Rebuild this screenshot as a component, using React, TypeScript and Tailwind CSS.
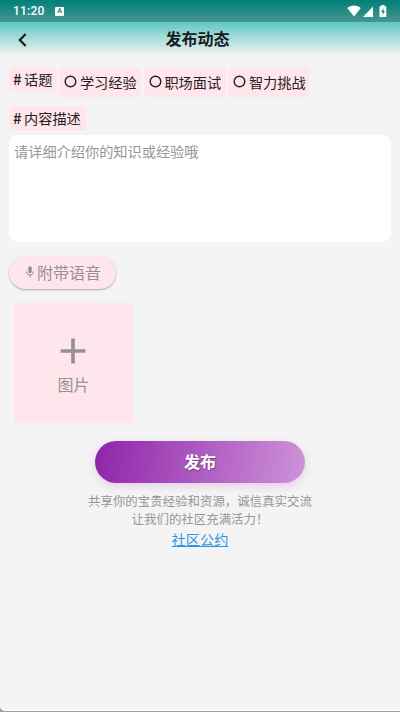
/**
 * "Publish a post" screen.
 *
 * Topic radio chips, a description box, optional voice and image
 * attachments, and the submit button with the community note below it.
 */

import { useState } from "react";

// ---------------------------------------------------------------------------
// Data
// ---------------------------------------------------------------------------

const TOPICS = ["学习经验", "职场面试", "智力挑战"];

// ---------------------------------------------------------------------------
// Icons
// ---------------------------------------------------------------------------

function WifiIcon() {
  return (
    <svg width="14" height="12" viewBox="0 0 14 12" fill="white">
      <path d="M7 11.5 0.2 3C2 1.4 4.4.5 7 .5S12 1.4 13.8 3Z" />
    </svg>
  );
}

function SignalIcon() {
  return (
    <svg width="10" height="11" viewBox="0 0 10 11" fill="white">
      <path d="M10 .4V11H0Z" />
    </svg>
  );
}

function BatteryIcon() {
  return (
    <svg width="8" height="12" viewBox="0 0 8 12">
      <path d="M2.3 0h3.2v1.2H7.3V12H.5V1.2h1.8Z" fill="white" />
      <path d="M4.5 3 2 7h1.6v3L6 6H4.5Z" fill="#2f8582" />
    </svg>
  );
}

function BackIcon() {
  return (
    <svg width="9" height="14" viewBox="0 0 9 14" fill="none" stroke="#181c1c" strokeWidth="2.2">
      <path d="M7.7 1 1.8 7l5.9 6" />
    </svg>
  );
}

function MicIcon() {
  return (
    <svg width="14" height="14" viewBox="0 0 24 24" fill="#969092">
      <path d="M12 14c1.66 0 3-1.34 3-3V5c0-1.66-1.34-3-3-3S9 3.34 9 5v6c0 1.66 1.34 3 3 3Zm5.3-3c0 3-2.54 5.1-5.3 5.1S6.7 14 6.7 11H5c0 3.41 2.72 6.23 6 6.72V21h2v-3.28c3.28-.48 6-3.3 6-6.72h-1.7Z" />
    </svg>
  );
}

function PlusIcon() {
  return (
    <svg width="26" height="26" viewBox="0 0 26 26" stroke="#969092" strokeWidth="3.7">
      <path d="M13 .5v25M.5 13h25" />
    </svg>
  );
}

// ---------------------------------------------------------------------------
// Parts
// ---------------------------------------------------------------------------

function SectionLabel({ text }: { text: string }) {
  return (
    <h2 className="flex h-[25px] items-center rounded-[4px] bg-[#ffe6ec] pr-[5px] pb-px pl-1 text-[14.2px] leading-[20px] text-[#252123]">
      <span className="mr-[2px] w-[9px] text-[15px] font-medium">#</span>
      {text}
    </h2>
  );
}

function Header() {
  return (
    <header className="flex h-14 flex-col bg-[linear-gradient(to_bottom,#00aba2,#f4f4f4)]">
      <div className="flex h-[22px] items-center bg-black/25 px-[13px] text-white">
        <span className="w-[42px] font-['Roboto',sans-serif] text-[12px] font-medium tracking-[0.2px]">
          11:20
        </span>
        <span className="flex h-[9px] w-[9px] items-center justify-center rounded-[1px] bg-white font-['Roboto',sans-serif] text-[7px] font-bold text-[#26847f]">
          A
        </span>
        <div className="ml-auto flex items-center">
          <WifiIcon />
          <span className="mt-px ml-[2px]">
            <SignalIcon />
          </span>
          <span className="ml-[6px]">
            <BatteryIcon />
          </span>
        </div>
      </div>
      <div className="grid flex-1 grid-cols-[40px_1fr_45px] items-center">
        <button type="button" aria-label="返回" className="pt-px pl-[18px]">
          <BackIcon />
        </button>
        <h1 className="pb-[2px] text-center text-[16px] leading-none font-bold text-[#181c1c]">发布动态</h1>
      </div>
    </header>
  );
}

// ---------------------------------------------------------------------------
// Page
// ---------------------------------------------------------------------------

export default function App() {
  const [topic, setTopic] = useState("");
  const [description, setDescription] = useState("");

  return (
    <div className="h-[712px] w-[400px] overflow-hidden bg-[#9c9c9c] pb-px font-['Noto_Sans_CJK_SC',sans-serif]">
      <div className="flex h-full flex-col overflow-hidden rounded-bl-[5px] border-b border-white bg-[#f4f4f4]">
        <Header />

        <main className="flex flex-1 flex-col px-[9px] pt-[11px]">
          {/* Topics */}
          <div className="flex items-start">
            <SectionLabel text="话题" />
            <div className="ml-[2px] flex gap-[2.5px]" role="radiogroup" aria-label="话题">
              {TOPICS.map((t) => (
                <button
                  key={t}
                  type="button"
                  role="radio"
                  aria-checked={topic === t}
                  onClick={() => setTopic(t)}
                  className="flex h-[30px] w-[82px] items-center rounded-[4px] bg-[#ffe6ec] pl-[5px] text-[14.2px] leading-none whitespace-nowrap text-[#252123]"
                >
                  <span className="mr-[2.5px] flex h-[13px] w-[13px] shrink-0 items-center justify-center pb-px">
                    <svg width="13" height="13" viewBox="0 0 13 13" fill="none" stroke="#252123" className="shrink-0">
                      <circle cx="6.5" cy="6.5" r="5.3" strokeWidth="1.4" />
                      {topic === t && <circle cx="6.5" cy="6.5" r="2.5" fill="#252123" />}
                    </svg>
                  </span>
                  {t}
                </button>
              ))}
            </div>
          </div>

          {/* Description */}
          <div className="mt-[9px] flex">
            <SectionLabel text="内容描述" />
          </div>
          <textarea
            value={description}
            onChange={(e) => setDescription(e.target.value)}
            placeholder="请详细介绍你的知识或经验哦"
            className="mt-1 h-[107px] w-full resize-none rounded-[9px] bg-white px-[5px] py-[6px] text-[14.2px] leading-[20px] text-[#252123] outline-none placeholder:text-[#969696]"
          />

          {/* Attachments */}
          <button
            type="button"
            className="mt-[14px] flex h-[33px] w-[107px] items-center rounded-full bg-[#ffe6ec] pb-[2px] pl-[14px] text-[16px] leading-none text-[#969092] shadow-[0_1px_2px_rgba(0,0,0,0.3)]"
          >
            <MicIcon />
            <span>附带语音</span>
          </button>
          <button
            type="button"
            className="mt-[13.5px] ml-[4.4px] flex h-[120px] w-[120px] flex-col items-center rounded-[3px] bg-[#ffe6ec] pt-[35px] text-[#969092]"
          >
            <PlusIcon />
            <span className="mt-2 text-[16px] leading-6">图片</span>
          </button>

          {/* Submit */}
          <button
            type="button"
            className="mx-auto mt-[18px] h-[42px] w-[210px] rounded-full bg-[linear-gradient(100deg,#8e24aa,#ce93d8)] pb-px text-[16px] leading-none font-bold text-white shadow-[0_3px_8px_rgba(206,147,216,0.4)] [text-shadow:1px_1px_2px_rgba(0,0,0,0.3)]"
          >
            发布
          </button>
          <p className="mt-[9px] text-center text-[12.45px] leading-[18.5px] text-[#969696]">
            共享你的宝贵经验和资源，诚信真实交流
            <br />
            让我们的社区充满活力！
          </p>
          <a
            href="#"
            className="mx-auto text-[14.2px] leading-5 text-[#2d94e4] underline decoration-1 underline-offset-[1px]"
          >
            社区公约
          </a>
        </main>
      </div>
    </div>
  );
}
